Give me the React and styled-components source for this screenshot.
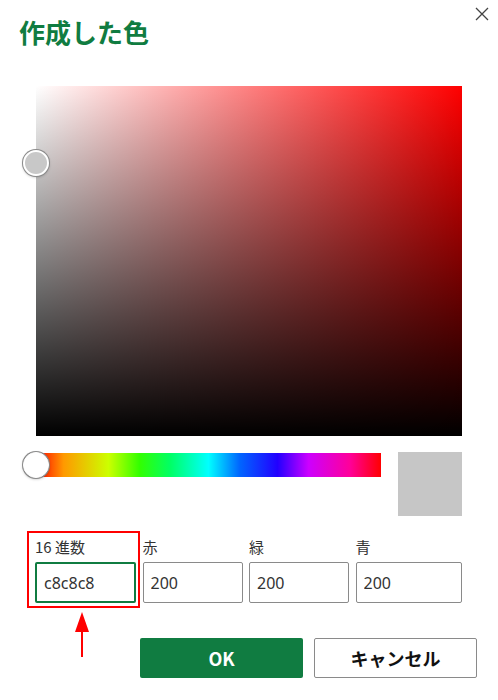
import React, { useState } from "react";
import styled, { createGlobalStyle } from "styled-components";

const GlobalStyle = createGlobalStyle`
  html, body {
    margin: 0;
    padding: 0;
    background: #ffffff;
  }
  body {
    font-family: "Noto Sans CJK JP", "Noto Sans", sans-serif;
    color: #222;
  }
`;

const Dialog = styled.div`
  width: 498px;
  height: 700px;
  box-sizing: border-box;
  display: flex;
  flex-direction: column;
`;

const Header = styled.div`
  display: flex;
  justify-content: space-between;
  align-items: flex-start;
  padding: 0 9px 0 19px;
  height: 86px;
`;

const Title = styled.h2`
  margin: 14px 0 0;
  font-size: 26px;
  line-height: 36px;
  font-weight: 700;
  color: #107c41;
`;

const CloseButton = styled.button`
  margin-top: 7px;
  padding: 0;
  border: none;
  background: none;
  width: 14px;
  height: 14px;
  cursor: pointer;
  display: flex;
`;

const Picker = styled.div`
  padding-left: 36px;
  width: 426px;
  display: flex;
  flex-direction: column;
`;

const Field = styled.div`
  position: relative;
  height: 350px;
  background: linear-gradient(to bottom, rgba(0, 0, 0, 0), #000),
    linear-gradient(to right, #fff, #ff0000);
`;

const Thumb = styled.div`
  position: absolute;
  width: 22px;
  height: 22px;
  border-radius: 50%;
  border: 2px solid #fff;
  box-shadow: 0 0 0 1px #8a8a8a, 0 1px 3px rgba(0, 0, 0, 0.3);
  transform: translate(-50%, -50%);
  background: ${(p) => p.$fill};
`;

const HueRow = styled.div`
  display: flex;
  align-items: flex-start;
  gap: 17px;
  margin-top: 16px;
`;

const HueBar = styled.div`
  position: relative;
  width: 345px;
  height: 24px;
  margin-top: 1px;
  background: linear-gradient(
    to right,
    #ff0000 0%,
    #ff9900 8%,
    #ccff00 21%,
    #33ff00 30%,
    #00ff66 39%,
    #00ffff 50%,
    #0066ff 59%,
    #2200ff 70%,
    #cc00ff 79%,
    #ff0099 91%,
    #ff0000 100%
  );
`;

const Swatch = styled.div`
  width: 64px;
  height: 64px;
  background: ${(p) => p.$color};
`;

const Fields = styled.div`
  display: grid;
  grid-template-columns: 101px 100px 100px 106px;
  column-gap: 6.5px;
  margin-top: 20px;
  margin-left: -1px;
`;

const FieldGroup = styled.label`
  position: relative;
  display: flex;
  flex-direction: column;
`;

const Label = styled.span`
  font-size: 15px;
  line-height: 22px;
  height: 26px;
  color: #333;
`;

const Input = styled.input`
  box-sizing: border-box;
  width: 100%;
  height: 41px;
  padding: 0 7px;
  font-family: "Noto Sans", "Noto Sans CJK JP", sans-serif;
  font-size: 16px;
  color: #333;
  border-radius: 2px;
  border: ${(p) => (p.$active ? "2px solid #107c41" : "1px solid #8a8a8a")};
  outline: none;
  background: #fff;
`;

const Highlight = styled.div`
  position: absolute;
  left: -8px;
  right: -4px;
  top: -5px;
  bottom: -5px;
  border: 2px solid #ff0000;
  pointer-events: none;
`;

const Arrow = styled.svg`
  position: absolute;
  left: 39px;
  top: calc(100% + 9px);
`;

const Actions = styled.div`
  display: flex;
  justify-content: flex-end;
  gap: 11px;
  padding-right: 21px;
  margin-top: 35px;
`;

const Button = styled.button`
  width: 163px;
  height: 40px;
  border-radius: 2px;
  font-family: "Noto Sans CJK JP", "Noto Sans", sans-serif;
  font-size: 18px;
  font-weight: 700;
  cursor: pointer;
  background: ${(p) => (p.$primary ? "#107c41" : "#fff")};
  color: ${(p) => (p.$primary ? "#fff" : "#111")};
  border: ${(p) => (p.$primary ? "none" : "1px solid #8a8a8a")};
`;

const App = () => {
  const [hex, setHex] = useState("c8c8c8");
  const rgb = { r: "200", g: "200", b: "200" };

  return (
    <>
      <GlobalStyle />
      <Dialog>
        <Header>
          <Title>作成した色</Title>
          <CloseButton aria-label="閉じる">
            <svg width="14" height="14" viewBox="0 0 14 14">
              <path d="M1 1 L13 13 M13 1 L1 13" stroke="#444" strokeWidth="1.3" />
            </svg>
          </CloseButton>
        </Header>

        <Picker>
          <Field>
            <Thumb $fill="#c8c8c8" style={{ left: 0, top: 77 }} />
          </Field>

          <HueRow>
            <HueBar>
              <Thumb $fill="#fff" style={{ left: 0, top: 12, width: 24, height: 24, borderWidth: 1 }} />
            </HueBar>
            <Swatch $color="#c6c6c6" />
          </HueRow>

          <Fields>
            <FieldGroup>
              <Label>16 進数</Label>
              <Input $active value={hex} onChange={(e) => setHex(e.target.value)} />
              <Highlight />
              <Arrow width="16" height="50" viewBox="0 0 16 50">
                <polygon points="8,0 1,20 15,20" fill="#ff0000" />
                <rect x="7" y="18" width="2" height="27" fill="#ff0000" />
              </Arrow>
            </FieldGroup>
            <FieldGroup>
              <Label>赤</Label>
              <Input defaultValue={rgb.r} />
            </FieldGroup>
            <FieldGroup>
              <Label>緑</Label>
              <Input defaultValue={rgb.g} />
            </FieldGroup>
            <FieldGroup>
              <Label>青</Label>
              <Input defaultValue={rgb.b} />
            </FieldGroup>
          </Fields>
        </Picker>

        <Actions>
          <Button $primary>OK</Button>
          <Button>キャンセル</Button>
        </Actions>
      </Dialog>
    </>
  );
};

export default App;
